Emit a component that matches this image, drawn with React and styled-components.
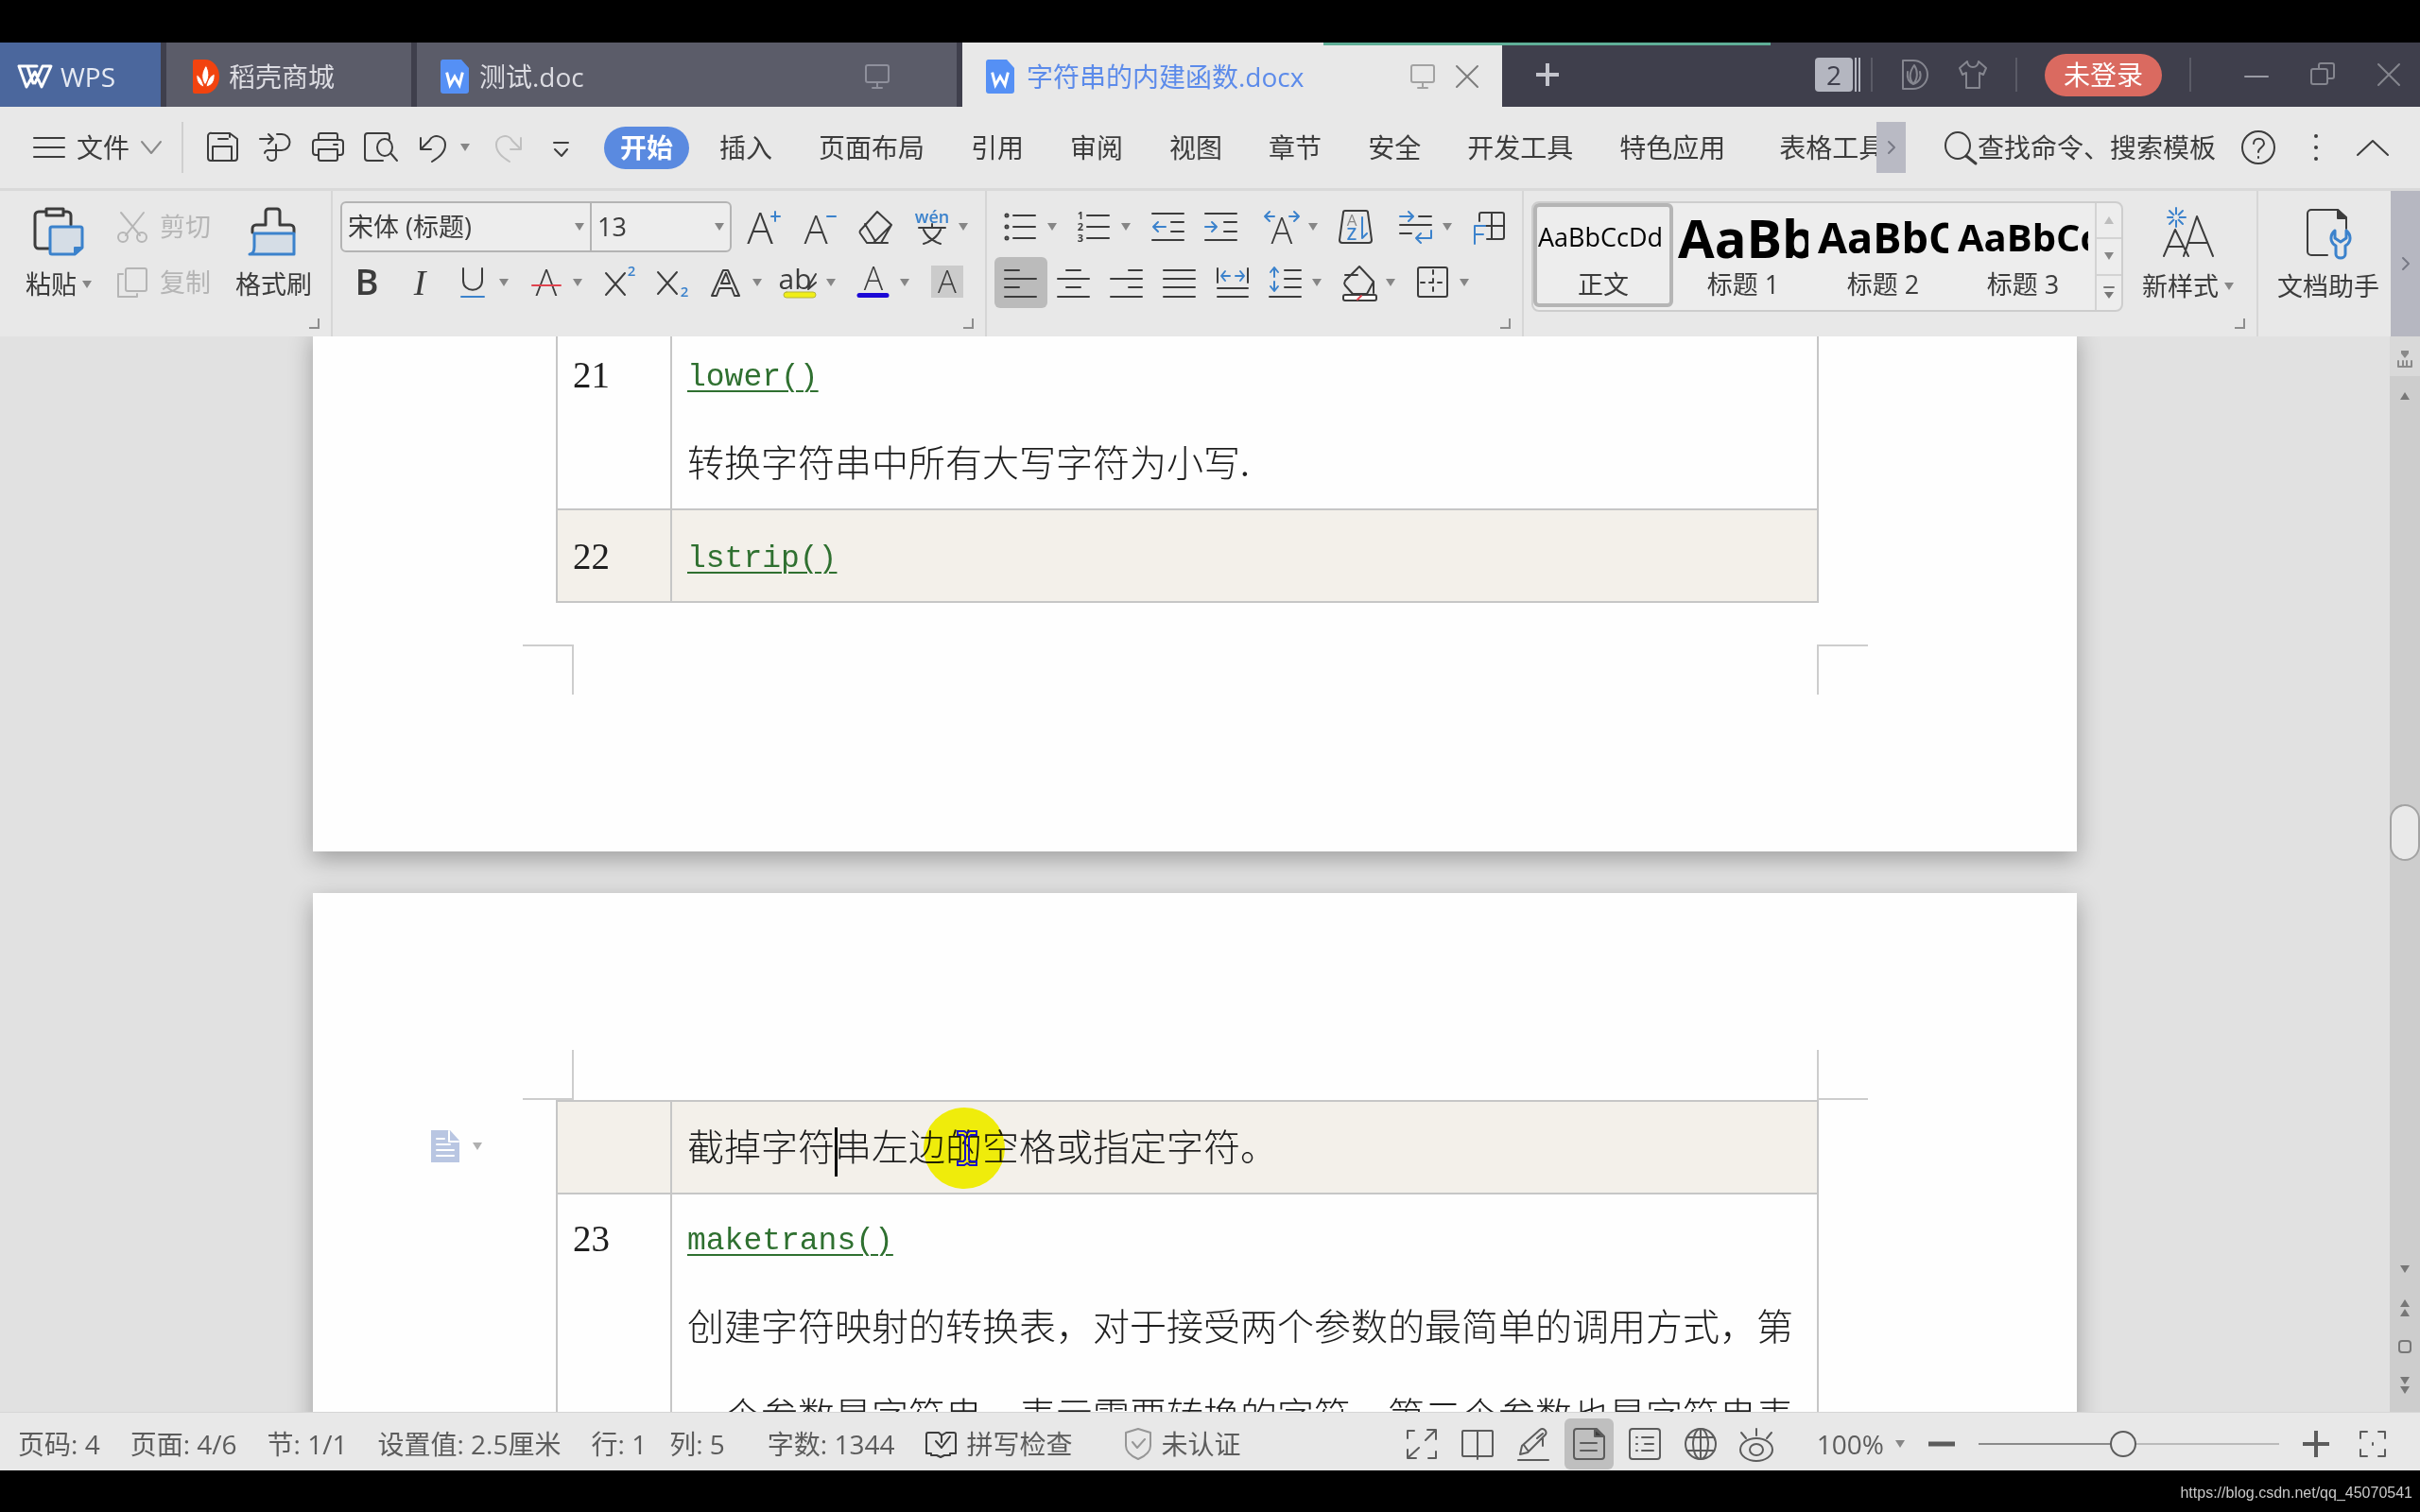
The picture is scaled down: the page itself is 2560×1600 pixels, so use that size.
import { useState } from "react";
import styled, { createGlobalStyle, css } from "styled-components";

const colors = {
  ink: "#3c3c3c",
  muted: "#5c5c5c",
  disabled: "#b5b5b5",
  blue: "#3b82cc",
  docBlue: "#5590f5",
  panel: "#e8e8e8",
  line: "#cfcfcf",
  bar: "#3f3f4c",
  tab: "#5b5c69",
};

const sans = `"Open Sans", "Noto Sans CJK SC", sans-serif`;

/* ---------- icons ---------- */

function Icon({ size = 40, height, box, color = colors.ink, width = 2, children }) {
  const h = height || size;
  return (
    <svg
      width={size}
      height={h}
      viewBox={box || `0 0 ${size} ${h}`}
      fill="none"
      stroke={color}
      strokeWidth={width}
      strokeLinecap="round"
      strokeLinejoin="round"
      aria-hidden="true"
    >
      {children}
    </svg>
  );
}

function Letter({ x = 20, y = 33, size = 38, weight = 300, fill = colors.ink, italic, children }) {
  return (
    <text
      x={x}
      y={y}
      fontSize={size}
      fontWeight={weight}
      fontStyle={italic ? "italic" : "normal"}
      fontFamily={italic ? "Liberation Serif, serif" : sans}
      textAnchor="middle"
      fill={fill}
      stroke="none"
    >
      {children}
    </text>
  );
}

const Arrow = ({ up, color = "#868686" }) => (
  <svg width="10" height="8" viewBox="0 0 10 8" aria-hidden="true">
    <path d={up ? "M0 8h10L5 0z" : "M0 0h10L5 8z"} fill={color} />
  </svg>
);

const DocIcon = () => (
  <Icon size={32} height={38} color="#fff" width={3}>
    <path d="M3 1h20l8 9v24a3 3 0 0 1-3 3H4a3 3 0 0 1-3-3V4a3 3 0 0 1 2-3z" fill={colors.docBlue} stroke="none" />
    <path d="M8 16l3 12 5-9 5 9 3-12" strokeLinecap="square" strokeLinejoin="miter" />
  </Icon>
);

const MonitorIcon = ({ color }) => (
  <Icon size={28} height={28} color={color}>
    <path d="M4 2h20a2 2 0 0 1 2 2v14a2 2 0 0 1-2 2H4a2 2 0 0 1-2-2V4a2 2 0 0 1 2-2zM14 20v6M9 26h10" />
  </Icon>
);

const CloseIcon = ({ color, size = 26 }) => (
  <Icon size={size} box="0 0 26 26" color={color}>
    <path d="M2 2l22 22M24 2L2 24" />
  </Icon>
);

const icons = {
  save: (
    <Icon>
      <path d="M9 5h19l8 6v20a3 3 0 0 1-3 3H8a3 3 0 0 1-3-3V8a3 3 0 0 1 4-3zM10 34V19h20v15M16 11h10M28 5v4" />
    </Icon>
  ),
  exportPdf: (
    <Icon>
      <path d="M4 11h14M13 6l5 5-5 5M22 6h5a8 8 0 0 1 0 17H13a4 4 0 0 0-4 3M21 17v13a4 4 0 0 1-4 4h-1a4 4 0 0 1-4-4" />
    </Icon>
  ),
  print: (
    <Icon>
      <path d="M10 12V7a2 2 0 0 1 2-2h16a2 2 0 0 1 2 2v5M10 28H7a3 3 0 0 1-3-3V15a3 3 0 0 1 3-3h26a3 3 0 0 1 3 3v10a3 3 0 0 1-3 3h-3M10 22h20v10a2 2 0 0 1-2 2H12a2 2 0 0 1-2-2zM26 17h4" />
    </Icon>
  ),
  preview: (
    <Icon>
      <path d="M22 34H6a3 3 0 0 1-3-3V8a3 3 0 0 1 3-3h20a3 3 0 0 1 3 3v3M31 27l6 7" />
      <ellipse cx="24" cy="20" rx="8" ry="9" />
    </Icon>
  ),
  undo: (
    <Icon>
      <path d="M6 10v12h11M7 21l8-8a9 9 0 0 1 17 4c0 8-6 13-14 18" />
    </Icon>
  ),
  redo: (
    <Icon color="#c0c0c0">
      <path d="M34 10v12H23M33 21l-8-8a9 9 0 0 0-17 4c0 8 6 13 14 18" />
    </Icon>
  ),
  customize: (
    <Icon>
      <path d="M13 15h15M14 22l7 7 6-7" />
    </Icon>
  ),
  grow: (
    <Icon>
      <Letter x={18} y={38} size={46}>A</Letter>
      <path d="M30 9h9M34 4v10" stroke={colors.blue} />
    </Icon>
  ),
  shrink: (
    <Icon>
      <Letter x={17} y={38} size={42}>A</Letter>
      <path d="M29 9h9" stroke={colors.blue} />
    </Icon>
  ),
  eraser: (
    <Icon>
      <path d="M22 4L4 24a3 3 0 0 0 0 3l7 10h7L37 18zM37 18L26 37M9 17l12 20M11 37h22" />
    </Icon>
  ),
  phonetic: (
    <Icon>
      <Letter y={16} size={18} weight={600} fill={colors.blue}>wén</Letter>
      <path d="M6 21h28M20 17v4M11 23c3 7 9 12 18 15M29 23c-3 7-9 12-18 15" />
    </Icon>
  ),
  bold: (
    <Icon>
      <Letter weight={600}>B</Letter>
    </Icon>
  ),
  italic: (
    <Icon>
      <Letter italic weight={400}>I</Letter>
    </Icon>
  ),
  underline: (
    <Icon>
      <path d="M10 5v13c0 13 20 13 20 0V5" />
      <path d="M8 35h24" stroke={colors.blue} />
    </Icon>
  ),
  strike: (
    <Icon>
      <Letter y={34}>A</Letter>
      <path d="M5 23h30" stroke="#e0434e" />
    </Icon>
  ),
  superscript: (
    <Icon>
      <path d="M5 10l20 23M25 10L5 33" />
      <Letter x={32} y={13} size={15} weight={600} fill={colors.blue}>2</Letter>
    </Icon>
  ),
  subscript: (
    <Icon>
      <path d="M4 9l20 23M24 9L4 32" />
      <Letter x={32} y={35} size={15} weight={600} fill={colors.blue}>2</Letter>
    </Icon>
  ),
  effects: (
    <Icon>
      <path d="M5 34L17 7h5l12 27h-5l-3-8H13l-3 8zM15 21h9l-4-11z" />
    </Icon>
  ),
  highlight: (
    <Icon>
      <Letter x={15} y={27} size={30} weight={400}>ab</Letter>
      <path d="M29 27l2-6 6-10M29 27l8-7" />
      <rect x="3" y="30" width="34" height="6" rx="3" fill="#f0ee18" stroke="#b5b43c" strokeWidth="1" />
    </Icon>
  ),
  fontColor: (
    <Icon>
      <Letter y={28} size={34}>A</Letter>
      <path d="M5 33.5h29" stroke="#1c09d6" strokeWidth="5" />
    </Icon>
  ),
  shade: (
    <Icon>
      <rect x="3" y="2" width="34" height="34" fill="#cbcbcb" stroke="none" />
      <Letter y={31} size={33}>A</Letter>
    </Icon>
  ),
  bullets: (
    <Icon>
      <path d="M12 8h23M12 20h23M12 32h23" />
      <circle cx="5" cy="8" r="1.5" />
      <circle cx="5" cy="20" r="1.5" />
      <circle cx="5" cy="32" r="1.5" />
    </Icon>
  ),
  numbers: (
    <Icon>
      <path d="M12 8h23M12 20h23M12 32h23" />
      <Letter x={5} y={12} size={11} weight={700}>1</Letter>
      <Letter x={5} y={24} size={11} weight={700}>2</Letter>
      <Letter x={5} y={36} size={11} weight={700}>3</Letter>
    </Icon>
  ),
  outdent: (
    <Icon>
      <path d="M3 6h33M23 15h13M23 25h13M3 34h33" />
      <path d="M4 20h13M9 15l-5 5 5 5" stroke={colors.blue} />
    </Icon>
  ),
  indent: (
    <Icon>
      <path d="M3 6h33M23 15h13M23 25h13M3 34h33" />
      <path d="M3 20h12M10 15l5 5-5 5" stroke={colors.blue} />
    </Icon>
  ),
  charScale: (
    <Icon>
      <Letter y={38} size={38}>A</Letter>
      <path d="M2 9h10M7 4L2 9l5 5M28 9h10M33 4l5 5-5 5" stroke={colors.blue} />
    </Icon>
  ),
  sort: (
    <Icon>
      <path d="M9 3h22a2 2 0 0 1 2 2l4 29a3 3 0 0 1-3 3H6a3 3 0 0 1-3-3L7 5a2 2 0 0 1 2-2z" />
      <Letter x={16} y={19} size={17} fill="#888" weight={400}>A</Letter>
      <Letter x={16} y={34} size={18} fill={colors.blue} weight={600}>Z</Letter>
      <path d="M27 10v22M27 32l5-5" stroke={colors.blue} />
    </Icon>
  ),
  tabStops: (
    <Icon>
      <path d="M23 9h13M3 18h33M3 27h12" />
      <path d="M3 9h13M12 4l5 5-5 5M36 24v8H20M25 27l-5 5 5 5" stroke={colors.blue} />
    </Icon>
  ),
  frame: (
    <Icon>
      <path d="M9 14V7a2 2 0 0 1 2-2h22a2 2 0 0 1 2 2v24a2 2 0 0 1-2 2H17M22 5v28M16 19h19" />
      <path d="M4 38V19h11M4 28h9" stroke={colors.blue} />
    </Icon>
  ),
  alignLeft: (
    <Icon>
      <path d="M3 7h15M3 16h33M3 25h15M3 35h33" />
    </Icon>
  ),
  alignCenter: (
    <Icon>
      <path d="M12 7h15M3 16h33M12 25h15M3 35h33" />
    </Icon>
  ),
  alignRight: (
    <Icon>
      <path d="M22 7h14M3 16h33M22 25h14M3 35h33" />
    </Icon>
  ),
  justify: (
    <Icon>
      <path d="M3 7h33M3 16h33M3 25h33M3 35h33" />
    </Icon>
  ),
  distribute: (
    <Icon>
      <path d="M4 5v15M36 5v15M4 26h32M4 35h32" />
      <path d="M8 13h9M12 8l-4 5 4 5M23 13h9M28 8l4 5-4 5" stroke={colors.blue} />
    </Icon>
  ),
  lineSpacing: (
    <Icon>
      <path d="M19 7h17M19 16h17M19 25h17M3 35h33" />
      <path d="M8 5v9M4 9l4-5 4 5M8 19v9M4 24l4 5 4-5" stroke={colors.blue} />
    </Icon>
  ),
  fill: (
    <Icon>
      <path d="M20 3L5 18a5 5 0 0 0 0 5l8 9h15l7-13zM5 12h13M35 19v12" />
      <rect x="3" y="33" width="35" height="6" rx="2" fill="#fff" />
      <path d="M18 38l4-4" stroke="#e0434e" />
    </Icon>
  ),
  border: (
    <Icon>
      <rect x="4" y="4" width="31" height="31" rx="2" />
      <path d="M20 7v25M7 20h26" strokeDasharray="4 5" />
    </Icon>
  ),
  fullscreen: (
    <Icon size={36} color={colors.muted}>
      <path d="M3 12V4h7M33 26v7h-8M3 24v9h9M4 32l11-10M33 13V3h-9M32 4L22 14" />
    </Icon>
  ),
  book: (
    <Icon size={36} color={colors.muted}>
      <path d="M18 4H3a2 2 0 0 0-1 1v25a2 2 0 0 0 1 1h15M18 4h15a2 2 0 0 1 1 1v25a2 2 0 0 1-1 1H18M18 4v30" />
    </Icon>
  ),
  pen: (
    <Icon size={36} color={colors.muted}>
      <path d="M4 29l2-9L25 3a4 4 0 0 1 6 5L12 27zM8 19l5 7M22 12l6-5M28 12v8M2 35h32" />
    </Icon>
  ),
  pageView: (
    <Icon size={36} color={colors.muted}>
      <path d="M5 2h21l8 8v21a3 3 0 0 1-3 3H5a3 3 0 0 1-3-3V5a3 3 0 0 1 3-3zM9 17h17M9 25h17" />
      <path d="M24 2v8h9z" fill={colors.ink} />
    </Icon>
  ),
  outline: (
    <Icon size={36} color={colors.muted}>
      <rect x="2" y="2" width="32" height="32" rx="3" />
      <path d="M9 11h1M15 11h12M9 18h1M18 18h9M9 25h1M15 25h12" />
    </Icon>
  ),
  globe: (
    <Icon size={36} color={colors.muted}>
      <circle cx="18" cy="18" r="16" />
      <ellipse cx="18" cy="18" rx="8" ry="16" />
      <path d="M18 2v32M4 11h28M4 25h28" />
    </Icon>
  ),
  eye: (
    <Icon size={36} color={colors.muted}>
      <path d="M2 6l5 6M18 2v7M34 6l-5 6" />
      <ellipse cx="18" cy="24" rx="17" ry="12" />
      <ellipse cx="18" cy="24" rx="7" ry="6" />
    </Icon>
  ),
};

/* ---------- data ---------- */

const menuTabs = ["开始", "插入", "页面布局", "引用", "审阅", "视图", "章节", "安全", "开发工具", "特色应用", "表格工具"];

const quickTools = [
  { name: "save", label: "保存" },
  { name: "exportPdf", label: "输出为PDF" },
  { name: "print", label: "打印" },
  { name: "preview", label: "打印预览" },
  { name: "undo", label: "撤消", arrow: true },
  { name: "redo", label: "恢复" },
  { name: "customize", label: "自定义" },
];

const fontTools = [
  { name: "grow", label: "增大字号" },
  { name: "shrink", label: "减小字号" },
  { name: "eraser", label: "清除格式" },
  { name: "phonetic", label: "拼音指南", arrow: true },
];

const styleTools = [
  { name: "bold", label: "加粗" },
  { name: "italic", label: "倾斜" },
  { name: "underline", label: "下划线", arrow: true },
  { name: "strike", label: "删除线", arrow: true },
  { name: "superscript", label: "上标" },
  { name: "subscript", label: "下标" },
  { name: "effects", label: "文字效果", arrow: true },
  { name: "highlight", label: "突出显示", arrow: true },
  { name: "fontColor", label: "字体颜色", arrow: true },
  { name: "shade", label: "字符底纹" },
];

const paragraphTools = [
  [
    { name: "bullets", label: "项目符号", arrow: true },
    { name: "numbers", label: "编号", arrow: true },
    { name: "outdent", label: "减少缩进量" },
    { name: "indent", label: "增加缩进量" },
  ],
  [
    { name: "charScale", label: "中文版式", arrow: true },
    { name: "sort", label: "排序" },
  ],
  [
    { name: "tabStops", label: "制表位", arrow: true },
    { name: "frame", label: "显示标记" },
  ],
];

const alignTools = [
  { name: "alignLeft", label: "左对齐" },
  { name: "alignCenter", label: "居中对齐" },
  { name: "alignRight", label: "右对齐" },
  { name: "justify", label: "两端对齐" },
  { name: "distribute", label: "分散对齐" },
  { name: "lineSpacing", label: "行距", arrow: true },
  { name: "fill", label: "底纹颜色", arrow: true },
  { name: "border", label: "边框", arrow: true },
];

const styleGallery = [
  { sample: "AaBbCcDd", size: 27, weight: 400, name: "正文" },
  { sample: "AaBb", size: 56, weight: 700, name: "标题 1" },
  { sample: "AaBbC", size: 45, weight: 700, name: "标题 2" },
  { sample: "AaBbCc", size: 40, weight: 700, name: "标题 3" },
];

const views = [
  { name: "fullscreen", label: "全屏显示" },
  { name: "book", label: "阅读版式" },
  { name: "pen", label: "写作模式" },
  { name: "pageView", label: "页面视图" },
  { name: "outline", label: "大纲" },
  { name: "globe", label: "Web版式" },
  { name: "eye", label: "护眼模式" },
];

/* ---------- parts ---------- */

function Tool({ tool, active, onClick }) {
  return (
    <ToolButton type="button" aria-label={tool.label} $arrow={tool.arrow} $active={active} onClick={onClick}>
      <Glyph>{icons[tool.name]}</Glyph>
      {tool.arrow && <Arrow />}
    </ToolButton>
  );
}

function TitleBar() {
  return (
    <TitleBarWrapper>
      <HomeTab type="button">
        <Icon size={38} height={26} color="#fff" width={3}>
          <path d="M2 2h9l6 18M2 2l8 22 9-16 7 16L36 2h-9l-8 18M11 2h10" />
        </Icon>
        WPS
      </HomeTab>
      <StoreTab type="button">
        <Icon size={32} height={38} width={1} color="#fff">
          <path d="M4 1h11a15 18 0 0 1 0 36H4a2 2 0 0 1-2-2V3a2 2 0 0 1 2-2z" fill="#f2430f" stroke="none" />
          <path d="M16 7c4 7 4 14-1 21-5-7-4-14 1-21zM6 17c4 2 6 6 8 13-5-1-9-6-8-13zM25 16c1 8-3 13-9 14 1-7 4-12 9-14z" fill="#fff" stroke="#f2430f" />
        </Icon>
        稻壳商城
      </StoreTab>
      <FileTab type="button">
        <DocIcon />
        <TabTitle>测试.doc</TabTitle>
        <TabEnd>
          <MonitorIcon color="#8f909c" />
        </TabEnd>
      </FileTab>
      <FileTab type="button" $active>
        <DocIcon />
        <TabTitle>字符串的内建函数.docx</TabTitle>
        <MonitorIcon color="#a2a2a2" />
        <CloseIcon color="#7d7d7d" />
      </FileTab>
      <AddTab type="button" aria-label="新建">
        <Icon size={28} color="#c4c5cd" width={4}>
          <path d="M2 14h24M14 2v24" strokeLinecap="butt" />
        </Icon>
      </AddTab>
      <SyncLine />
      <TitleTools>
        <TabCount>
          <b>2</b>
          <i />
          <i />
        </TabCount>
        <Separator />
        <Icon size={32} height={32} color="#85868f">
          <path d="M3 1h11a15 15 0 0 1 0 30H3z" />
          <path d="M15 6c4 6 4 14-1 20-5-6-4-13 1-20zM8 13c-1 7 1 11 6 13M21 13c2 6-1 11-7 13" />
        </Icon>
        <Icon size={32} height={32} color="#85868f">
          <path d="M10 2L2 9l3 7 4-2v16h14V14l4 2 3-7-8-7c-1 8-11 8-12 0z" />
        </Icon>
        <Separator />
        <LoginButton type="button">未登录</LoginButton>
        <Separator />
      </TitleTools>
      <WindowTools>
        <Icon size={26} color="#9a9ba4">
          <path d="M1 15h24" />
        </Icon>
        <Icon size={28} color="#85868f">
          <path d="M10 8V4a2 2 0 0 1 2-2h12a2 2 0 0 1 2 2v12a2 2 0 0 1-2 2h-5M4 8h13a2 2 0 0 1 2 2v12a2 2 0 0 1-2 2H4a2 2 0 0 1-2-2V10a2 2 0 0 1 2-2z" />
        </Icon>
        <CloseIcon color="#85868f" />
      </WindowTools>
    </TitleBarWrapper>
  );
}

function MenuBar() {
  const [current, setCurrent] = useState("开始");

  return (
    <MenuWrapper>
      <FileMenu type="button">
        <Icon size={34} height={24}>
          <path d="M1 2h32M1 12h32M1 22h32" />
        </Icon>
        文件
        <Icon size={22} height={14} color="#8a8a8a">
          <path d="M1 1l10 12L21 1" />
        </Icon>
      </FileMenu>
      <QuickBar>
        {quickTools.map((tool) => (
          <Tool key={tool.name} tool={tool} />
        ))}
      </QuickBar>
      <MenuTabs>
        {menuTabs.map((tab) => (
          <MenuTab key={tab} type="button" $active={tab === current} onClick={() => setCurrent(tab)}>
            {tab}
          </MenuTab>
        ))}
      </MenuTabs>
      <MoreTabs type="button" aria-label="更多">
        <Icon size={8} height={14} color="#777985">
          <path d="M1 1l6 6-6 6" />
        </Icon>
      </MoreTabs>
      <Search>
        <Icon size={36}>
          <ellipse cx="15" cy="16" rx="13" ry="14" />
          <path d="M24 27l10 8" strokeWidth="3" />
        </Icon>
        <input type="text" placeholder="查找命令、搜索模板" aria-label="查找命令、搜索模板" />
      </Search>
      <MenuEnd>
        <Icon size={36}>
          <circle cx="18" cy="18" r="17" />
          <path d="M13 14c0-7 11-7 11 0 0 4-6 4-6 9M18 28v1" />
        </Icon>
        <Icon size={6} height={30} width={4}>
          <path d="M3 3v0.1M3 15v0.1M3 27v0.1" />
        </Icon>
        <Icon size={34} height={18}>
          <path d="M1 17L17 2l16 15" />
        </Icon>
      </MenuEnd>
    </MenuWrapper>
  );
}

function Ribbon() {
  const [align, setAlign] = useState("alignLeft");
  const [style, setStyle] = useState("正文");

  return (
    <RibbonWrapper>
      <ClipboardGroup>
        <BigButton type="button">
          <Icon size={54} height={52}>
            <path d="M14 5H6a4 4 0 0 0-4 4v31a4 4 0 0 0 4 4h11M32 5h4a4 4 0 0 1 4 4v10M14 2h18v7H14z" strokeWidth="3" />
            <path d="M20 21h30a2 2 0 0 1 2 2v20l-8 7H20a2 2 0 0 1-2-2V23a2 2 0 0 1 2-2z" fill="#d5dde6" stroke={colors.blue} strokeWidth="3" />
            <path d="M52 43l-8 7v-7z" fill={colors.blue} stroke={colors.blue} />
          </Icon>
          <span>
            粘贴
            <Arrow />
          </span>
        </BigButton>
        <SmallButtons>
          <SmallButton type="button" disabled>
            <Icon size={34} color={colors.disabled}>
              <path d="M5 2l20 24M29 2L10 26" />
              <circle cx="7" cy="28" r="5" />
              <circle cx="27" cy="28" r="5" />
            </Icon>
            剪切
          </SmallButton>
          <SmallButton type="button" disabled>
            <Icon size={34} color={colors.disabled}>
              <path d="M12 2h18a2 2 0 0 1 2 2v20a2 2 0 0 1-2 2H12a2 2 0 0 1-2-2V4a2 2 0 0 1 2-2zM7 8H2v24h20v-3" />
            </Icon>
            复制
          </SmallButton>
        </SmallButtons>
        <BigButton type="button">
          <Icon size={54} height={52}>
            <path d="M4 27v-4a4 4 0 0 1 4-4h10V5a3 3 0 0 1 3-3h9a3 3 0 0 1 3 3v14h11a4 4 0 0 1 4 4v4" strokeWidth="3" />
            <path d="M6 28h42v22H1c4 0 5-4 5-8z" fill="#d5dde6" stroke={colors.blue} strokeWidth="3" />
          </Icon>
          <span>格式刷</span>
        </BigButton>
        <Launcher />
      </ClipboardGroup>

      <ToolGroup>
        <ToolRow $gap>
          <FontBoxes>
            <SelectBox $width="262px">
              <select aria-label="字体" defaultValue="宋体 (标题)">
                <option>宋体 (标题)</option>
              </select>
              <Arrow />
            </SelectBox>
            <SelectBox $width="148px">
              <select aria-label="字号" defaultValue="13">
                <option>13</option>
              </select>
              <Arrow />
            </SelectBox>
          </FontBoxes>
          <Cluster $gap="4px">
            {fontTools.map((tool) => (
              <Tool key={tool.name} tool={tool} />
            ))}
          </Cluster>
        </ToolRow>
        <ToolRow>
          {styleTools.map((tool) => (
            <Tool key={tool.name} tool={tool} />
          ))}
        </ToolRow>
        <Launcher />
      </ToolGroup>

      <ToolGroup>
        <Cluster $gap="8px">
          {paragraphTools.map((group) => (
            <ToolRow key={group[0].name}>
              {group.map((tool) => (
                <Tool key={tool.name} tool={tool} />
              ))}
            </ToolRow>
          ))}
        </Cluster>
        <ToolRow>
          {alignTools.map((tool) => (
            <Tool key={tool.name} tool={tool} active={tool.name === align} onClick={() => setAlign(tool.name)} />
          ))}
        </ToolRow>
        <Launcher />
      </ToolGroup>

      <StylesGroup>
        <Gallery>
          {styleGallery.map((item) => (
            <GalleryItem key={item.name} type="button" $active={item.name === style} onClick={() => setStyle(item.name)}>
              <Sample $size={item.size} $weight={item.weight}>
                {item.sample}
              </Sample>
              <span>{item.name}</span>
            </GalleryItem>
          ))}
          <GalleryScroll>
            <button type="button" aria-label="上一行">
              <Arrow up color="#bdbdbd" />
            </button>
            <button type="button" aria-label="下一行">
              <Arrow />
            </button>
            <button type="button" aria-label="展开">
              <Icon size={12} height={14} color="#777">
                <path d="M1 1h10" />
                <path d="M1 6h10l-5 7z" fill="#777" stroke="none" />
              </Icon>
            </button>
          </GalleryScroll>
        </Gallery>
        <BigButton type="button">
          <Icon size={54} height={54}>
            <path d="M1 52l12-28 14 28M5 42h17M22 52L36 10l17 42M27 38h20" />
            <path d="M14 1v20M5 11h19M7 4l14 14M21 4L7 18" stroke={colors.blue} />
            <circle cx="14" cy="11" r="3" fill={colors.panel} stroke="none" />
          </Icon>
          <span>
            新样式
            <Arrow />
          </span>
        </BigButton>
        <Launcher />
      </StylesGroup>

      <HelperGroup>
        <BigButton type="button">
          <Icon size={54} height={54}>
            <path d="M26 51H9a4 4 0 0 1-4-4V7a4 4 0 0 1 4-4h28l9 8v12" />
            <path d="M37 3v9h9z" fill={colors.ink} />
            <path d="M34 25c-6 5-5 13 1 16v9a5 4 0 0 0 10 0v-9c6-3 7-11 1-16v8l-6 4-6-4z" stroke={colors.blue} strokeWidth="3" />
          </Icon>
          <span>文档助手</span>
        </BigButton>
      </HelperGroup>
      <RibbonMore type="button" aria-label="更多工具">
        <Icon size={8} height={14} color="#777985">
          <path d="M1 1l6 6-6 6" />
        </Icon>
      </RibbonMore>
    </RibbonWrapper>
  );
}

function DocumentArea() {
  return (
    <DocumentWrapper>
      <Pages>
        <Page $continued>
          <DocTable>
            <tbody>
              <tr>
                <td>21</td>
                <td>
                  <a href="#lower">lower()</a>
                  <p>转换字符串中所有大写字符为小写.</p>
                </td>
              </tr>
              <ShadedRow>
                <td>22</td>
                <td>
                  <a href="#lstrip">lstrip()</a>
                </td>
              </ShadedRow>
            </tbody>
          </DocTable>
          <MarginMarks $bottom>
            <i />
            <i />
          </MarginMarks>
        </Page>
        <Page>
          <ParagraphHandle type="button" aria-label="段落布局">
            <Icon size={30} height={34} color="#fff">
              <path d="M0 0h20l10 11v23H0z" fill="#b9c6e2" stroke="none" />
              <path d="M19 1v11h10M6 9h8M6 15h14M6 21h18M6 27h18" />
            </Icon>
            <Arrow color="#b0b0b0" />
          </ParagraphHandle>
          <MarginMarks>
            <i />
            <i />
          </MarginMarks>
          <DocTable>
            <tbody>
              <ShadedRow>
                <td />
                <td>
                  <p>
                    截掉字符
                    <Caret />
                    串左边
                    <Pointer>
                      的
                      <svg width="22" height="40" viewBox="0 0 22 40" fill="none" stroke="#1a12c8" strokeWidth="2" aria-hidden="true">
                        <path d="M1 2h7l3 2 3-2h7v4h-6l-2 2v24l2 2h6v4h-7l-3-2-3 2H1v-4h6l2-2V8L7 6H1z" />
                      </svg>
                    </Pointer>
                    空格或指定字符。
                  </p>
                </td>
              </ShadedRow>
              <tr>
                <td>23</td>
                <td>
                  <a href="#maketrans">maketrans()</a>
                  <p>
                    创建字符映射的转换表，对于接受两个参数的最简单的调用方式，第一个参数是字符串，表示需要转换的字符，第二个参数也是字符串表
                  </p>
                </td>
              </tr>
            </tbody>
          </DocTable>
        </Page>
      </Pages>
      <ScrollBar>
        <RulerToggle type="button" aria-label="标尺">
          <Icon size={18} height={20} color="#8a8a8a">
            <path d="M5 1h8v3l-4 5-4-5z" fill="#8a8a8a" stroke="none" />
            <path d="M2 12v6h14v-6M7 12v5M11 12v5" />
          </Icon>
        </RulerToggle>
        <ScrollButton type="button" aria-label="向上滚动">
          <Arrow up color="#777" />
        </ScrollButton>
        <ScrollTrack>
          <ScrollThumb />
        </ScrollTrack>
        <ScrollButton type="button" aria-label="向下滚动">
          <Arrow color="#777" />
        </ScrollButton>
        <ScrollButton type="button" aria-label="上一页">
          <Arrow up color="#777" />
          <Arrow up color="#777" />
        </ScrollButton>
        <ScrollButton type="button" aria-label="选择浏览对象">
          <Icon size={14} color="#777">
            <rect x="1" y="1" width="12" height="12" rx="3" />
          </Icon>
        </ScrollButton>
        <ScrollButton type="button" aria-label="下一页">
          <Arrow color="#777" />
          <Arrow color="#777" />
        </ScrollButton>
      </ScrollBar>
    </DocumentWrapper>
  );
}

function StatusBar() {
  const [view, setView] = useState("pageView");
  const [zoom, setZoom] = useState(48);

  return (
    <StatusWrapper>
      <StatusInfo>
        <span>页码: 4</span>
        <span>页面: 4/6</span>
        <span>节: 1/1</span>
        <span>设置值: 2.5厘米</span>
        <Position>
          <span>行: 1</span>
          <span>列: 5</span>
        </Position>
        <span>字数: 1344</span>
        <StatusButton type="button">
          <Icon size={36} height={34}>
            <path d="M15 5H4a2 2 0 0 0-2 2v20h5v2h6l4 2 4-2h6v-2h6V7a2 2 0 0 0-2-2h-8l-5 3zM18 8v7M12 14l6 7 9-12" />
          </Icon>
          拼写检查
        </StatusButton>
        <StatusButton type="button">
          <Icon size={32} height={36} color="#969696">
            <path d="M16 2l13 4v14c0 7-6 11-13 14C9 31 3 27 3 20V6zM10 16l5 6 8-9" />
          </Icon>
          未认证
        </StatusButton>
      </StatusInfo>
      <Views>
        {views.map(({ name, label }) => (
          <ViewButton key={name} type="button" aria-label={label} $active={name === view} onClick={() => setView(name)}>
            {icons[name]}
          </ViewButton>
        ))}
      </Views>
      <ZoomTools>
        <ZoomValue type="button">
          100%
          <Arrow />
        </ZoomValue>
        <Icon size={28} color={colors.muted} width={5}>
          <path d="M0 14h28" strokeLinecap="butt" />
        </Icon>
        <ZoomSlider
          type="range"
          min="0"
          max="100"
          value={zoom}
          aria-label="缩放"
          onChange={(event) => setZoom(Number(event.target.value))}
        />
        <Icon size={28} color={colors.muted} width={4}>
          <path d="M0 14h28M14 0v28" strokeLinecap="butt" />
        </Icon>
      </ZoomTools>
      <FitButton type="button" aria-label="适合页面">
        <Icon size={28} color={colors.muted}>
          <path d="M1 8V1h7M20 1h7v7M27 20v7h-7M8 27H1v-7M14 13v2" />
        </Icon>
      </FitButton>
    </StatusWrapper>
  );
}

function App() {
  return (
    <Screen>
      <GlobalStyle />
      <TitleBar />
      <MenuBar />
      <Ribbon />
      <DocumentArea />
      <StatusBar />
      <Footer>https://blog.csdn.net/qq_45070541</Footer>
    </Screen>
  );
}

const GlobalStyle = createGlobalStyle`
  * {
    box-sizing: border-box;
  }

  body {
    margin: 0;
    background: #000;
  }

  button,
  input,
  select {
    margin: 0;
    padding: 0;
    border: 0;
    background: none;
    color: inherit;
    font: inherit;
  }

  svg {
    flex: none;
    display: block;
    overflow: visible;
  }
`;

const Screen = styled.div`
  display: flex;
  flex-direction: column;
  height: 100vh;
  padding-top: 45px;
  background: #000;
  color: ${colors.ink};
  font-family: ${sans};
  font-size: 28px;
  line-height: 36px;
  white-space: nowrap;
  overflow: hidden;
`;

const TitleBarWrapper = styled.header`
  position: relative;
  display: flex;
  flex: none;
  gap: 6px;
  height: 68px;
  background: ${colors.bar};
`;

const HomeTab = styled.button`
  display: flex;
  align-items: center;
  gap: 8px;
  width: 170px;
  padding: 4px 0 0 18px;
  background: #4b679d;
  color: #e6eaf3;
`;

const StoreTab = styled.button`
  display: flex;
  align-items: center;
  gap: 8px;
  width: 259px;
  padding: 4px 0 0 26px;
  background: ${colors.tab};
  color: #dcdce2;
`;

const FileTab = styled.button`
  display: flex;
  align-items: center;
  gap: 10px;
  width: 571px;
  padding: 4px 24px 0;
  background: ${colors.tab};
  color: #dcdce2;
  text-align: left;

  ${({ $active }) =>
    $active &&
    css`
      gap: 20px;
      background: ${colors.panel};
      color: #5c8bea;

      > svg:first-child {
        margin-right: -8px;
      }
    `}
`;

const TabTitle = styled.span`
  flex: 1;
`;

const TabEnd = styled.span`
  padding-right: 46px;
`;

const AddTab = styled.button`
  display: flex;
  align-items: center;
  padding: 0 28px;
`;

const SyncLine = styled.i`
  position: absolute;
  top: 0;
  left: 1400px;
  width: 473px;
  height: 3px;
  background: #5fae97;
`;

const TitleTools = styled.div`
  display: flex;
  align-items: center;
  gap: 29px;
  margin-left: auto;
`;

const TabCount = styled.span`
  display: flex;
  gap: 2px;
  height: 36px;
  margin-right: -18px;

  b {
    width: 40px;
    border-radius: 4px;
    background: #b4b6c0;
    color: ${colors.bar};
    font-weight: 400;
    text-align: center;
  }

  i {
    width: 2px;
    background: #b4b6c0;
  }
`;

const Separator = styled.i`
  width: 2px;
  height: 36px;
  background: #5a5b66;
`;

const LoginButton = styled.button`
  height: 45px;
  padding: 0 20px;
  border-radius: 23px;
  background: #da6a60;
  color: #fff;
`;

const WindowTools = styled.div`
  display: flex;
  align-items: center;
  gap: 43px;
  padding: 0 20px 0 50px;
`;

const MenuWrapper = styled.nav`
  display: flex;
  flex: none;
  align-items: center;
  height: 89px;
  border-bottom: 3px solid #d9d9d9;
  background: ${colors.panel};
`;

const FileMenu = styled.button`
  display: flex;
  align-items: center;
  gap: 12px;
  height: 54px;
  padding: 0 21px 0 35px;
  border-right: 2px solid ${colors.line};
`;

const QuickBar = styled.div`
  display: flex;
  padding: 0 18px 0 13px;
`;

const ToolButton = styled.button`
  display: flex;
  flex: none;
  align-items: center;
  width: ${({ $arrow }) => ($arrow ? "78px" : "56px")};
  height: 54px;
  border-radius: 6px;
  background: ${({ $active }) => ($active ? "#bbbbbb" : "transparent")};
`;

const Glyph = styled.span`
  display: flex;
  flex: 0 0 56px;
  justify-content: center;
`;

const MenuTabs = styled.div`
  display: flex;
  flex: 1;
  gap: 15px;
  min-width: 0;
  overflow: hidden;
`;

const MenuTab = styled.button`
  flex: none;
  height: 45px;
  padding: 0 17px;
  border-radius: 23px;

  &:last-child {
    margin-left: 8px;
  }

  ${({ $active }) =>
    $active &&
    css`
      background: #5a8ae0;
      color: #fff;
      font-weight: 700;
    `}
`;

const MoreTabs = styled.button`
  display: flex;
  align-items: center;
  justify-content: center;
  width: 31px;
  height: 54px;
  background: #b9bac4;
`;

const Search = styled.label`
  display: flex;
  align-items: center;
  margin-left: 40px;

  input {
    width: 252px;
  }

  input::placeholder {
    color: ${colors.ink};
    opacity: 1;
  }
`;

const MenuEnd = styled.div`
  display: flex;
  align-items: center;
  gap: 40px;
  padding: 0 33px 0 27px;
`;

const RibbonWrapper = styled.section`
  display: flex;
  flex: none;
  height: 154px;
  background: ${colors.panel};
  font-size: 27px;
`;

const Group = styled.div`
  position: relative;
  padding-top: 11px;
  border-right: 2px solid #d6d6d6;
`;

const ClipboardGroup = styled(Group)`
  display: flex;
  gap: 26px;
  padding-left: 27px;
  padding-right: 20px;
`;

const BigButton = styled.button`
  display: flex;
  flex-direction: column;
  align-items: center;
  gap: 12px;
  height: 114px;
  padding-top: 6px;

  span {
    display: flex;
    align-items: center;
    gap: 6px;
  }
`;

const SmallButtons = styled.div`
  display: flex;
  flex-direction: column;
  gap: 5px;
`;

const SmallButton = styled.button`
  display: flex;
  align-items: center;
  gap: 12px;
  height: 54px;
  color: ${colors.disabled};
`;

const Launcher = styled.i`
  position: absolute;
  right: 12px;
  bottom: 8px;
  width: 11px;
  height: 11px;
  border: solid #8d8d8d;
  border-width: 0 2px 2px 0;
`;

const ToolGroup = styled(Group)`
  display: flex;
  flex-direction: column;
  gap: 5px;
  padding-left: 8px;
  padding-right: 6px;
`;

const ToolRow = styled.div`
  display: flex;
  gap: ${({ $gap }) => ($gap ? "4px" : "0")};
`;

const Cluster = styled.div`
  display: flex;
  gap: ${({ $gap }) => $gap};
`;

const FontBoxes = styled.div`
  display: flex;
  height: 54px;
  border: 2px solid #b4b4b4;
  border-radius: 6px;
  background: #ededed;
`;

const SelectBox = styled.span`
  display: flex;
  align-items: center;
  width: ${({ $width }) => $width};
  padding-right: 6px;

  & + & {
    border-left: 2px solid #b4b4b4;
  }

  select {
    flex: 1;
    min-width: 0;
    padding-left: 6px;
    appearance: none;
  }
`;

const StylesGroup = styled(Group)`
  display: flex;
  gap: 20px;
  padding-left: 8px;
  padding-right: 24px;
`;

const Gallery = styled.div`
  display: flex;
  height: 117px;
  border: 2px solid #cdcdcd;
  border-radius: 8px;
  background: #ededed;
`;

const GalleryItem = styled.button`
  display: flex;
  flex-direction: column;
  align-items: center;
  width: 148px;
  height: 110px;
  border: 4px solid ${({ $active }) => ($active ? "#b5b5b5" : "transparent")};
  border-radius: 6px;
`;

const Sample = styled.span`
  width: 138px;
  height: 64px;
  color: #000;
  font-size: ${({ $size }) => $size}px;
  font-weight: ${({ $weight }) => $weight};
  line-height: 64px;
  text-align: left;
  overflow: hidden;
`;

const GalleryScroll = styled.div`
  display: flex;
  flex-direction: column;
  width: 28px;
  margin-left: 2px;
  border-left: 2px solid #d3d3d3;

  button {
    display: flex;
    flex: 1;
    align-items: center;
    justify-content: center;
  }

  button + button {
    border-top: 2px solid #d3d3d3;
  }
`;

const HelperGroup = styled(Group)`
  flex: 1;
  padding-left: 20px;
  border-right: 0;
`;

const RibbonMore = styled.button`
  display: flex;
  align-items: center;
  justify-content: center;
  width: 31px;
  background: #b6b7c1;
`;

const DocumentWrapper = styled.main`
  display: flex;
  flex: 1;
  min-height: 0;
  background: #e1e1e1;
`;

const Pages = styled.div`
  display: flex;
  flex: 1;
  flex-direction: column;
  align-items: center;
  gap: 44px;
  min-width: 0;
  overflow: hidden;
`;

const Page = styled.article`
  position: relative;
  flex: none;
  width: 100%;
  max-width: 1866px;
  margin-top: ${({ $continued }) => ($continued ? "-8px" : "0")};
  padding: ${({ $continued }) => ($continued ? "0 273px 166px 257px" : "166px 273px 166px 257px")};
  background: #fefefe;
  box-shadow: 0 8px 24px rgba(0, 0, 0, 0.3);
`;

const DocTable = styled.table`
  width: 100%;
  border-collapse: collapse;
  table-layout: fixed;
  color: #1e1e1e;
  font-family: "Liberation Serif", "Noto Sans CJK SC", serif;
  font-size: 39px;
  font-weight: 300;
  line-height: 94px;
  white-space: normal;

  td {
    padding: 0 16px;
    border: 2px solid #c6c6c6;
    vertical-align: top;
  }

  td:first-child {
    width: 121px;
  }

  p {
    margin: 0;
  }

  a {
    display: block;
    width: max-content;
    padding-top: 6px;
    color: #2f7030;
    font-family: "Liberation Mono", monospace;
    font-size: 33px;
    line-height: 88px;
    text-decoration-thickness: 2px;
    text-underline-offset: 5px;
  }
`;

const ShadedRow = styled.tr`
  height: 98px;
  background: #f3f0ea;

  td {
    padding-top: 2px;
  }
`;

const MarginMarks = styled.div`
  display: flex;
  justify-content: space-between;
  margin: ${({ $bottom }) => ($bottom ? "44px -52px 0 -35px" : "0 -52px 0 -35px")};

  i {
    width: 54px;
    height: 53px;
    border: 0 solid #cdcdcd;
    border-width: ${({ $bottom }) => ($bottom ? "2px 2px 0 0" : "0 2px 2px 0")};
  }

  i:last-child {
    border-width: ${({ $bottom }) => ($bottom ? "2px 0 0 2px" : "0 0 2px 2px")};
  }
`;

const ParagraphHandle = styled.button`
  position: absolute;
  top: 251px;
  left: 125px;
  display: flex;
  align-items: center;
  gap: 14px;
`;

const Caret = styled.span`
  position: relative;

  &::after {
    content: "";
    position: absolute;
    top: 0;
    left: 0;
    width: 3px;
    height: 52px;
    background: #000;
  }
`;

/* highlighted mouse position over the text */
const Pointer = styled.span`
  position: relative;

  &::before {
    content: "";
    position: absolute;
    top: 50%;
    left: 50%;
    width: 86px;
    height: 86px;
    margin: -43px;
    border-radius: 50%;
    background: #fbfb0c;
    mix-blend-mode: multiply;
  }

  svg {
    position: absolute;
    top: 50%;
    left: 50%;
    margin: -20px -8px;
  }
`;

const ScrollBar = styled.aside`
  display: flex;
  flex-direction: column;
  align-items: center;
  width: 32px;
  padding-bottom: 8px;
  background: #cdcdcd;
`;

const RulerToggle = styled.button`
  display: flex;
  align-items: center;
  justify-content: center;
  width: 100%;
  height: 42px;
  padding-top: 6px;
  background: #d9d9d9;
`;

const ScrollButton = styled.button`
  display: flex;
  flex-direction: column;
  align-items: center;
  justify-content: center;
  gap: 2px;
  height: 41px;

  svg {
    width: 14px;
  }
`;

const ScrollTrack = styled.div`
  display: flex;
  flex: 1;
  flex-direction: column;
  width: 100%;

  &::before {
    content: "";
    flex: 47 0 0;
  }

  &::after {
    content: "";
    flex: 47 0 0;
  }
`;

const ScrollThumb = styled.div`
  height: 60px;
  border: 2px solid #a3a3a3;
  border-radius: 16px;
  background: #e9e9e9;
`;

const StatusWrapper = styled.footer`
  display: flex;
  flex: none;
  align-items: center;
  height: 62px;
  padding-top: 4px;
  border-top: 1px solid #d6d6d6;
  background: ${colors.panel};
  color: ${colors.muted};
`;

const StatusInfo = styled.div`
  display: flex;
  flex: 1;
  align-items: center;
  gap: 32px;
  padding-left: 19px;
`;

const Position = styled.span`
  display: flex;
  gap: 24px;
  padding-right: 13px;
`;

const StatusButton = styled.button`
  display: flex;
  align-items: center;
  gap: 8px;

  & + & {
    margin-left: 22px;
  }
`;

const Views = styled.div`
  display: flex;
  gap: 7px;
  padding-right: 38px;
`;

const ViewButton = styled.button`
  display: flex;
  align-items: center;
  justify-content: center;
  width: 52px;
  height: 54px;
  border-radius: 6px;
  background: ${({ $active }) => ($active ? "#bfbfbf" : "transparent")};
`;

const ZoomTools = styled.div`
  display: flex;
  align-items: center;
  gap: 25px;
`;

const FitButton = styled.button`
  padding: 0 36px 0 32px;
`;

const ZoomValue = styled.button`
  display: flex;
  align-items: center;
  gap: 12px;
`;

const ZoomSlider = styled.input`
  width: 318px;
  height: 30px;
  appearance: none;

  &::-webkit-slider-runnable-track {
    height: 2px;
    background: linear-gradient(to right, #8a8a8a 50%, #bababa 50%);
  }

  &::-webkit-slider-thumb {
    width: 28px;
    height: 28px;
    margin-top: -13px;
    border: 2px solid ${colors.muted};
    border-radius: 50%;
    background: ${colors.panel};
    appearance: none;
  }
`;

const Footer = styled.div`
  flex: none;
  height: 44px;
  padding-right: 8px;
  color: #c9c9c9;
  font-family: "Liberation Sans", sans-serif;
  font-size: 16px;
  line-height: 48px;
  text-align: right;
`;

export default App;
